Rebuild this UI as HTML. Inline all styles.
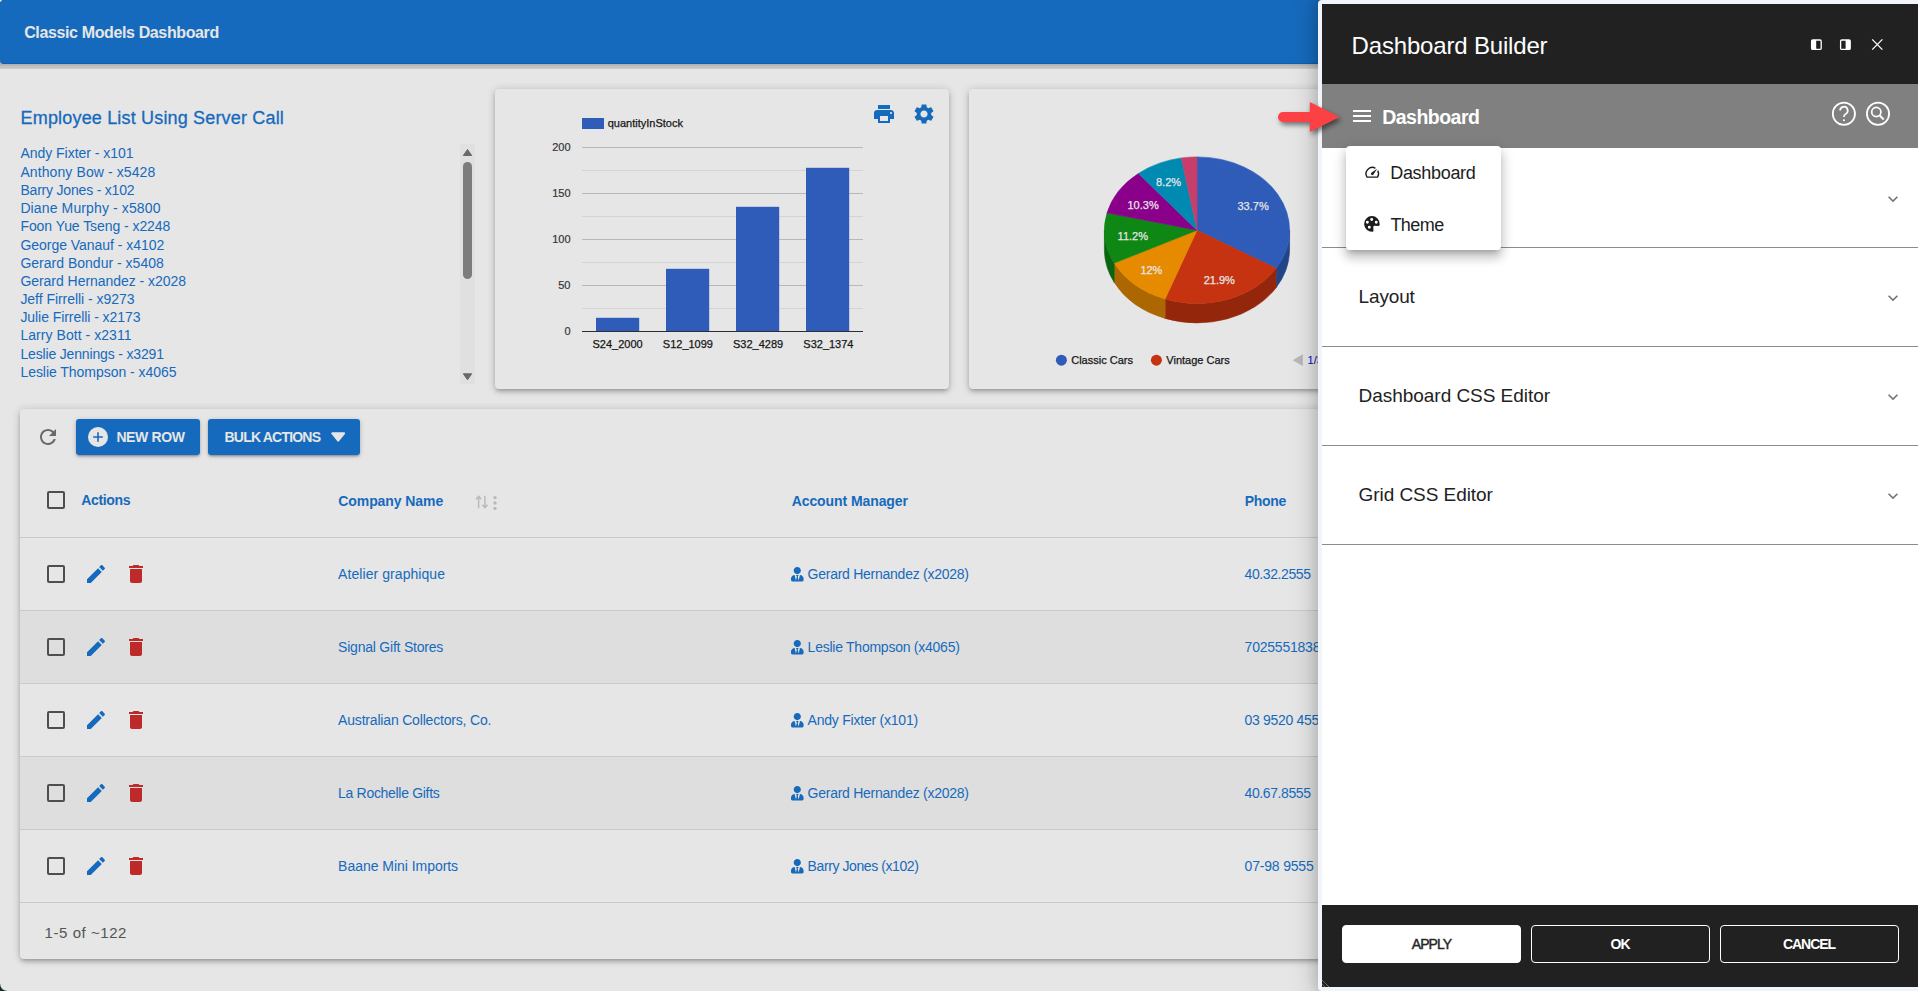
<!DOCTYPE html>
<html lang="en"><head><meta charset="utf-8"><title>Classic Models Dashboard</title>
<style>
*{box-sizing:border-box}
html,body{margin:0;padding:0}
body{width:1918px;height:991px;overflow:hidden;background:#fff;font-family:"Liberation Sans",sans-serif;position:relative}
h2{margin:0;font-weight:normal}
.t{position:absolute;white-space:pre;line-height:1}
.abs{position:absolute;overflow:visible}
.hdr{position:absolute;left:0;top:0;width:1918px;height:64px;background:#1976d2;border-bottom:1px solid #0f69c9;border-radius:0 0 0 4px}
.hshadow{position:absolute;left:0;top:60px;width:1918px;height:9px;background:linear-gradient(#bdbdbd 0,#c1c1c1 4px,#d6d6d6 6.5px,#e4e4e4 9px)}
.card{position:absolute;background:#fff;border-radius:4px;box-shadow:0 1px 8px rgba(0,0,0,.2),0 3px 4px rgba(0,0,0,.14),0 3px 3px -2px rgba(0,0,0,.12)}
.sbtrack{position:absolute;left:460px;top:144px;width:15px;height:240px;background:#f9f9f9}
.sbthumb{position:absolute;left:463px;top:162px;width:9px;height:117px;border-radius:5px;background:#8a8a8a}
.btn{position:absolute;background:#1976d2;border-radius:3px;box-shadow:0 1px 5px rgba(0,0,0,.2),0 2px 2px rgba(0,0,0,.14),0 3px 1px -2px rgba(0,0,0,.12)}
.cb{position:absolute;width:18px;height:18px;border:2px solid #575757;border-radius:2px}
.row{position:absolute;left:20px;width:1500px;height:73px;border-top:1px solid #e0e0e0}
.row.alt{background:rgba(0,0,0,.03)}
.overlay{position:absolute;left:0;top:0;width:1918px;height:991px;background:rgba(0,0,0,.098)}
.corner{position:absolute;left:-1px;top:984px;width:8px;height:8px;background:radial-gradient(circle at 100% 0,rgba(0,0,0,0) 6.2px,#16282a 7.4px)}
.tl{position:absolute;left:0;top:0;width:3px;height:3px;background:radial-gradient(circle at 0 0,#f3ebdd 0.9px,rgba(243,235,221,0) 2.4px)}
.arrow{filter:drop-shadow(2px 3px 2.5px rgba(0,0,0,.5))}
.panel{position:absolute;left:1318px;top:0;width:604px;height:991px;background:#f1f5f9;border-radius:4px;box-shadow:0 0 12px 2px rgba(0,0,0,.13),0 0 24px 6px rgba(0,0,0,.15)}
.phead{position:absolute;left:4px;top:4px;width:600px;height:80px;background:#212121}
.pbar{position:absolute;left:4px;top:84px;width:600px;height:64px;background:#808080}
.pbody{position:absolute;left:4px;top:148px;width:600px;height:757px;background:#fff}
.pfoot{position:absolute;left:4px;top:905px;width:600px;height:82px;background:#212121}
.acc{position:absolute;left:1322px;width:596px;height:1px;background:#8c8c8c}
.menu{position:absolute;left:1346px;top:146px;width:155px;height:104px;background:#fff;border-radius:4px;box-shadow:0 5px 5px -3px rgba(0,0,0,.2),0 8px 10px 1px rgba(0,0,0,.14),0 3px 14px 2px rgba(0,0,0,.12)}
.fbtn{position:absolute;top:925px;width:179px;height:38px;border:1px solid #fff;border-radius:4px}
.fbtn.solid{background:#fff}
</style></head>
<body>
<div class="hshadow"></div><header class="hdr"></header>
<div class="t" style="left:24.20px;top:25px;font-size:16px;color:#fff;font-weight:bold;letter-spacing:-0.372px;">Classic Models Dashboard</div>
<section class="emp">
<h2 class="t" style="left:20.60px;top:109px;font-size:18px;color:#1976d2;letter-spacing:0.171px;-webkit-text-stroke:0.3px #1976d2;">Employee List Using Server Call</h2>
<div class="t" style="left:20.40px;top:146px;font-size:14px;color:#1976d2;letter-spacing:-0.028px;">Andy Fixter - x101</div>
<div class="t" style="left:20.40px;top:165px;font-size:14px;color:#1976d2;letter-spacing:0.100px;">Anthony Bow - x5428</div>
<div class="t" style="left:20.40px;top:183px;font-size:14px;color:#1976d2;letter-spacing:-0.194px;">Barry Jones - x102</div>
<div class="t" style="left:20.40px;top:201px;font-size:14px;color:#1976d2;letter-spacing:0.122px;">Diane Murphy - x5800</div>
<div class="t" style="left:20.40px;top:219px;font-size:14px;color:#1976d2;letter-spacing:-0.062px;">Foon Yue Tseng - x2248</div>
<div class="t" style="left:20.40px;top:238px;font-size:14px;color:#1976d2;letter-spacing:-0.034px;">George Vanauf - x4102</div>
<div class="t" style="left:20.40px;top:256px;font-size:14px;color:#1976d2;letter-spacing:0.009px;">Gerard Bondur - x5408</div>
<div class="t" style="left:20.40px;top:274px;font-size:14px;color:#1976d2;letter-spacing:-0.039px;">Gerard Hernandez - x2028</div>
<div class="t" style="left:20.40px;top:292px;font-size:14px;color:#1976d2;letter-spacing:-0.043px;">Jeff Firrelli - x9273</div>
<div class="t" style="left:20.40px;top:310px;font-size:14px;color:#1976d2;letter-spacing:-0.062px;">Julie Firrelli - x2173</div>
<div class="t" style="left:20.40px;top:328px;font-size:14px;color:#1976d2;letter-spacing:0.053px;">Larry Bott - x2311</div>
<div class="t" style="left:20.40px;top:347px;font-size:14px;color:#1976d2;letter-spacing:-0.161px;">Leslie Jennings - x3291</div>
<div class="t" style="left:20.40px;top:365px;font-size:14px;color:#1976d2;letter-spacing:-0.041px;">Leslie Thompson - x4065</div>
<div class="sbtrack"></div><div class="sbthumb"></div>
<svg class="abs" style="left:460px;top:144px" width="15" height="240" viewBox="0 0 15 240"><path d="M3.3 11.5 L7.5 5.5 L11.7 11.5Z M3.3 229.8 L7.5 235.8 L11.7 229.8Z" fill="#757575" stroke="#757575" stroke-width="1" stroke-linejoin="round"/></svg>
</section>
<section class="card" style="left:495px;top:89px;width:454px;height:300px"></section>
<svg class="abs" style="left:495px;top:89px" width="454" height="300" viewBox="495 89 454 300" font-family='"Liberation Sans", sans-serif' font-size="11">
<rect x="582" y="118" width="22" height="11" fill="#3366cc"/>
<text x="607.7" y="127" fill="#1a1a1a" stroke="#1a1a1a" stroke-width="0.25">quantityInStock</text>
<rect x="582" y="308" width="281" height="1" fill="#ebebeb"/>
<rect x="582" y="262" width="281" height="1" fill="#ebebeb"/>
<rect x="582" y="216" width="281" height="1" fill="#ebebeb"/>
<rect x="582" y="170" width="281" height="1" fill="#ebebeb"/>
<rect x="582" y="285" width="281" height="1" fill="#cccccc"/>
<rect x="582" y="239" width="281" height="1" fill="#cccccc"/>
<rect x="582" y="193" width="281" height="1" fill="#cccccc"/>
<rect x="582" y="147" width="281" height="1" fill="#cccccc"/>
<rect x="596" y="317.8" width="43.2" height="13.2" fill="#3366cc"/>
<rect x="666" y="268.8" width="43.2" height="62.2" fill="#3366cc"/>
<rect x="736" y="206.8" width="43.2" height="124.2" fill="#3366cc"/>
<rect x="806" y="167.8" width="43.2" height="163.2" fill="#3366cc"/>
<rect x="582" y="331" width="281" height="1" fill="#333333"/>
<text x="570.5" y="334.9" text-anchor="end" fill="#3c3c3c" stroke="#3c3c3c" stroke-width="0.2">0</text>
<text x="570.5" y="288.9" text-anchor="end" fill="#3c3c3c" stroke="#3c3c3c" stroke-width="0.2">50</text>
<text x="570.5" y="242.9" text-anchor="end" fill="#3c3c3c" stroke="#3c3c3c" stroke-width="0.2">100</text>
<text x="570.5" y="196.9" text-anchor="end" fill="#3c3c3c" stroke="#3c3c3c" stroke-width="0.2">150</text>
<text x="570.5" y="150.9" text-anchor="end" fill="#3c3c3c" stroke="#3c3c3c" stroke-width="0.2">200</text>
<text x="617.6" y="347.8" text-anchor="middle" fill="#1a1a1a" stroke="#1a1a1a" stroke-width="0.25">S24_2000</text>
<text x="687.9" y="347.8" text-anchor="middle" fill="#1a1a1a" stroke="#1a1a1a" stroke-width="0.25">S12_1099</text>
<text x="758.1" y="347.8" text-anchor="middle" fill="#1a1a1a" stroke="#1a1a1a" stroke-width="0.25">S32_4289</text>
<text x="828.4" y="347.8" text-anchor="middle" fill="#1a1a1a" stroke="#1a1a1a" stroke-width="0.25">S32_1374</text>
</svg>
<svg class="abs" style="left:872px;top:102px" width="24" height="24" viewBox="0 0 24 24"><path d="M19 8H5c-1.66 0-3 1.34-3 3v6h4v4h12v-4h4v-6c0-1.66-1.34-3-3-3zm-3 11H8v-5h8v5zm3-7c-.55 0-1-.45-1-1s.45-1 1-1 1 .45 1 1-.45 1-1 1zm-1-9H6v4h12V3z" fill="#1976d2" /></svg>
<svg class="abs" style="left:912px;top:102px" width="24" height="24" viewBox="0 0 24 24"><path d="M19.14 12.94c.04-.3.06-.61.06-.94 0-.32-.02-.64-.07-.94l2.03-1.58c.18-.14.23-.41.12-.61l-1.92-3.32c-.12-.22-.37-.29-.59-.22l-2.39.96c-.5-.38-1.03-.7-1.62-.94l-.36-2.54c-.04-.24-.24-.41-.48-.41h-3.84c-.24 0-.43.17-.47.41l-.36 2.54c-.59.24-1.13.57-1.62.94l-2.39-.96c-.22-.08-.47 0-.59.22L2.74 8.87c-.12.21-.08.47.12.61l2.03 1.58c-.05.3-.09.63-.09.94s.02.64.07.94l-2.03 1.58c-.18.14-.23.41-.12.61l1.92 3.32c.12.22.37.29.59.22l2.39-.96c.5.38 1.03.7 1.62.94l.36 2.54c.05.24.24.41.48.41h3.84c.24 0 .44-.17.47-.41l.36-2.54c.59-.24 1.13-.56 1.62-.94l2.39.96c.22.08.47 0 .59-.22l1.92-3.32c.12-.22.07-.47-.12-.61l-2.01-1.58zM12 15.6c-1.98 0-3.6-1.62-3.6-3.6s1.62-3.6 3.6-3.6 3.6 1.62 3.6 3.6-1.62 3.6-3.6 3.6z" fill="#1976d2" /></svg>
<section class="card" style="left:969px;top:89px;width:454px;height:300px"></section>
<svg class="abs" style="left:969px;top:89px" width="454" height="300" viewBox="969 89 454 300" font-family='"Liberation Sans", sans-serif' font-size="11">
<path d="M1289.60 230.20 A92.6 73.3 0 0 1 1276.11 268.30 L1276.11 287.70 A92.6 73.3 0 0 0 1289.60 249.60Z" fill="#264d99" stroke="#264d99" stroke-width="0.6"/>
<path d="M1276.11 268.30 A92.6 73.3 0 0 1 1165.09 299.01 L1165.09 318.41 A92.6 73.3 0 0 0 1276.11 287.70Z" fill="#a52b0e" stroke="#a52b0e" stroke-width="0.6"/>
<path d="M1165.09 299.01 A92.6 73.3 0 0 1 1114.23 263.07 L1114.23 282.47 A92.6 73.3 0 0 0 1165.09 318.41Z" fill="#bf7300" stroke="#bf7300" stroke-width="0.6"/>
<path d="M1114.23 263.07 A92.6 73.3 0 0 1 1104.40 230.20 L1104.40 249.60 A92.6 73.3 0 0 0 1114.23 282.47Z" fill="#0c7012" stroke="#0c7012" stroke-width="0.6"/>
<path d="M1197.0 230.2 L1197.00 156.90 A92.6 73.3 0 0 1 1276.11 268.30Z" fill="#3366cc" stroke="#3366cc" stroke-width="0.6"/>
<path d="M1197.0 230.2 L1276.11 268.30 A92.6 73.3 0 0 1 1165.09 299.01Z" fill="#dc3912" stroke="#dc3912" stroke-width="0.6"/>
<path d="M1197.0 230.2 L1165.09 299.01 A92.6 73.3 0 0 1 1114.23 263.07Z" fill="#ff9900" stroke="#ff9900" stroke-width="0.6"/>
<path d="M1197.0 230.2 L1114.23 263.07 A92.6 73.3 0 0 1 1107.03 212.86Z" fill="#109618" stroke="#109618" stroke-width="0.6"/>
<path d="M1197.0 230.2 L1107.03 212.86 A92.6 73.3 0 0 1 1138.42 173.43Z" fill="#990099" stroke="#990099" stroke-width="0.6"/>
<path d="M1197.0 230.2 L1138.42 173.43 A92.6 73.3 0 0 1 1181.37 157.95Z" fill="#0099c6" stroke="#0099c6" stroke-width="0.6"/>
<path d="M1197.0 230.2 L1181.37 157.95 A92.6 73.3 0 0 1 1197.00 156.90Z" fill="#dd4477" stroke="#dd4477" stroke-width="0.6"/>
<text x="1253.1" y="210.1" text-anchor="middle" fill="#fff" stroke="#fff" stroke-width="0.25">33.7%</text>
<text x="1219.3" y="283.8" text-anchor="middle" fill="#fff" stroke="#fff" stroke-width="0.25">21.9%</text>
<text x="1151.4" y="274.1" text-anchor="middle" fill="#fff" stroke="#fff" stroke-width="0.25">12%</text>
<text x="1132.8" y="240.2" text-anchor="middle" fill="#fff" stroke="#fff" stroke-width="0.25">11.2%</text>
<text x="1143.1" y="208.5" text-anchor="middle" fill="#fff" stroke="#fff" stroke-width="0.25">10.3%</text>
<text x="1168.5" y="186.3" text-anchor="middle" fill="#fff" stroke="#fff" stroke-width="0.25">8.2%</text>
<circle cx="1061.4" cy="360.2" r="5.5" fill="#3366cc"/><text x="1071.2" y="364.2" fill="#1a1a1a" stroke="#1a1a1a" stroke-width="0.25">Classic Cars</text>
<circle cx="1156.4" cy="360.2" r="5.5" fill="#dc3912"/><text x="1166.3" y="364.2" fill="#1a1a1a" stroke="#1a1a1a" stroke-width="0.25">Vintage Cars</text>
<path d="M1292.6 360.2 L1302.8 354.3 V366.1Z" fill="#cccccc"/><text x="1307.6" y="364.2" fill="#0011cc">1/3</text>
</svg>
<section class="card" style="left:20px;top:409px;width:1500px;height:550px"></section>
<svg class="abs" style="left:36px;top:425px" width="24" height="24" viewBox="0 0 24 24"><path d="M17.65 6.35C16.2 4.9 14.21 4 12 4c-4.42 0-7.99 3.58-7.99 8s3.57 8 7.99 8c3.73 0 6.84-2.55 7.73-6h-2.08c-.82 2.33-3.04 4-5.65 4-3.31 0-6-2.69-6-6s2.69-6 6-6c1.66 0 3.14.69 4.22 1.78L13 11h7V4l-2.35 2.35z" fill="#757575" /></svg>
<div class="btn" style="left:76px;top:419px;width:124px;height:36px"></div>
<svg class="abs" style="left:85.8px;top:425px" width="24" height="24" viewBox="0 0 24 24"><circle cx="12" cy="12" r="10" fill="#fff"/><path d="M12 7.200V16.800M7.200 12H16.800" stroke="#1976d2" stroke-width="1.600" fill="none"/></svg>
<span class="t" style="left:116.40px;top:430px;font-size:14px;color:#fff;font-weight:bold;letter-spacing:-0.381px;">NEW ROW</span>
<div class="btn" style="left:208px;top:419px;width:152px;height:36px"></div>
<span class="t" style="left:224.50px;top:430px;font-size:14px;color:#fff;font-weight:bold;letter-spacing:-0.797px;">BULK ACTIONS</span>
<svg class="abs" style="left:328px;top:428px" width="20" height="18" viewBox="328 428 20 18"><path d="M332.3 433.3 H344.1 L338.2 440.6Z" fill="#fff" stroke="#fff" stroke-width="2" stroke-linejoin="round"/></svg>
<div class="cb" style="left:47px;top:491px"></div>
<span class="t" style="left:81.30px;top:493px;font-size:14px;color:#1976d2;font-weight:bold;letter-spacing:-0.363px;">Actions</span>
<span class="t" style="left:338.30px;top:494px;font-size:14px;color:#1976d2;font-weight:bold;letter-spacing:-0.084px;">Company Name</span>
<span class="t" style="left:791.70px;top:494px;font-size:14px;color:#1976d2;font-weight:bold;letter-spacing:-0.085px;">Account Manager</span>
<span class="t" style="left:1244.80px;top:494px;font-size:14px;color:#1976d2;font-weight:bold;letter-spacing:-0.316px;">Phone</span>
<svg class="abs" style="left:474px;top:494px" width="26" height="17" viewBox="474 494 26 17"><g fill="none" stroke="#cfcfcf" stroke-width="1.5"><path d="M478.6 508.3 V496.4 M476 499.2 L478.6 496.4 L481.2 499.2 M484.9 495.7 V507.6 M482.3 504.8 L484.9 507.6 L487.5 504.8"/></g><g fill="#cfcfcf"><circle cx="495" cy="497.6" r="1.7"/><circle cx="495" cy="503" r="1.7"/><circle cx="495" cy="508.4" r="1.7"/></g></svg>
<div class="row" style="top:537px"></div>
<div class="cb" style="left:47px;top:565px"></div>
<svg class="abs" style="left:83.8px;top:561.8px" width="24" height="24" viewBox="0 0 24 24"><path d="M3 17.25V21h3.75L17.81 9.94l-3.75-3.75L3 17.25zM20.71 7.04c.39-.39.39-1.02 0-1.41l-2.34-2.34c-.39-.39-1.02-.39-1.41 0l-1.83 1.83 3.75 3.75 1.83-1.83z" fill="#1976d2" /></svg>
<svg class="abs" style="left:123.8px;top:562px" width="24" height="24" viewBox="0 0 24 24"><path d="M6 19c0 1.1.9 2 2 2h8c1.1 0 2-.9 2-2V7H6v12zM19 4h-3.5l-1-1h-5l-1 1H5v2h14V4z" fill="#d32f2f" /></svg>
<span class="t" style="left:338.10px;top:567px;font-size:14px;color:#1976d2;letter-spacing:0.067px;">Atelier graphique</span>
<svg class="abs" style="left:791.2px;top:566.7px" width="12.6" height="14.4" viewBox="0 0 448 512" preserveAspectRatio="none"><path fill="#1976d2" d="M224 256c70.7 0 128-57.3 128-128S294.700 0 224 0 96 57.300 96 128s57.300 128 128 128zm95.800 32.600L272 480l-32-136 32-56h-96l32 56-32 136-47.800-191.400C56.900 292 0 350.300 0 422.400V464c0 26.500 21.500 48 48 48h352c26.500 0 48-21.500 48-48v-41.600c0-72.100-56.900-130.400-128.200-133.800z"/></svg>
<span class="t" style="left:807.60px;top:567px;font-size:14px;color:#1976d2;letter-spacing:-0.259px;">Gerard Hernandez (x2028)</span>
<span class="t" style="left:1244.60px;top:567px;font-size:14px;color:#1976d2;letter-spacing:-0.408px;">40.32.2555</span>
<div class="row alt" style="top:610px"></div>
<div class="cb" style="left:47px;top:638px"></div>
<svg class="abs" style="left:83.8px;top:634.8px" width="24" height="24" viewBox="0 0 24 24"><path d="M3 17.25V21h3.75L17.81 9.94l-3.75-3.75L3 17.25zM20.71 7.04c.39-.39.39-1.02 0-1.41l-2.34-2.34c-.39-.39-1.02-.39-1.41 0l-1.83 1.83 3.75 3.75 1.83-1.83z" fill="#1976d2" /></svg>
<svg class="abs" style="left:123.8px;top:635px" width="24" height="24" viewBox="0 0 24 24"><path d="M6 19c0 1.1.9 2 2 2h8c1.1 0 2-.9 2-2V7H6v12zM19 4h-3.5l-1-1h-5l-1 1H5v2h14V4z" fill="#d32f2f" /></svg>
<span class="t" style="left:338.10px;top:640px;font-size:14px;color:#1976d2;letter-spacing:-0.219px;">Signal Gift Stores</span>
<svg class="abs" style="left:791.2px;top:639.7px" width="12.6" height="14.4" viewBox="0 0 448 512" preserveAspectRatio="none"><path fill="#1976d2" d="M224 256c70.7 0 128-57.3 128-128S294.700 0 224 0 96 57.300 96 128s57.300 128 128 128zm95.800 32.600L272 480l-32-136 32-56h-96l32 56-32 136-47.800-191.400C56.900 292 0 350.300 0 422.400V464c0 26.500 21.500 48 48 48h352c26.500 0 48-21.500 48-48v-41.600c0-72.100-56.900-130.400-128.200-133.800z"/></svg>
<span class="t" style="left:807.60px;top:640px;font-size:14px;color:#1976d2;letter-spacing:-0.249px;">Leslie Thompson (x4065)</span>
<span class="t" style="left:1244.60px;top:640px;font-size:14px;color:#1976d2;letter-spacing:-0.227px;">7025551838</span>
<div class="row" style="top:683px"></div>
<div class="cb" style="left:47px;top:711px"></div>
<svg class="abs" style="left:83.8px;top:707.8px" width="24" height="24" viewBox="0 0 24 24"><path d="M3 17.25V21h3.75L17.81 9.94l-3.75-3.75L3 17.25zM20.71 7.04c.39-.39.39-1.02 0-1.41l-2.34-2.34c-.39-.39-1.02-.39-1.41 0l-1.83 1.83 3.75 3.75 1.83-1.83z" fill="#1976d2" /></svg>
<svg class="abs" style="left:123.8px;top:708px" width="24" height="24" viewBox="0 0 24 24"><path d="M6 19c0 1.1.9 2 2 2h8c1.1 0 2-.9 2-2V7H6v12zM19 4h-3.5l-1-1h-5l-1 1H5v2h14V4z" fill="#d32f2f" /></svg>
<span class="t" style="left:338.10px;top:713px;font-size:14px;color:#1976d2;letter-spacing:-0.187px;">Australian Collectors, Co.</span>
<svg class="abs" style="left:791.2px;top:712.7px" width="12.6" height="14.4" viewBox="0 0 448 512" preserveAspectRatio="none"><path fill="#1976d2" d="M224 256c70.7 0 128-57.3 128-128S294.700 0 224 0 96 57.300 96 128s57.300 128 128 128zm95.800 32.600L272 480l-32-136 32-56h-96l32 56-32 136-47.800-191.400C56.900 292 0 350.300 0 422.400V464c0 26.500 21.500 48 48 48h352c26.500 0 48-21.500 48-48v-41.600c0-72.100-56.900-130.400-128.200-133.800z"/></svg>
<span class="t" style="left:807.60px;top:713px;font-size:14px;color:#1976d2;letter-spacing:-0.226px;">Andy Fixter (x101)</span>
<span class="t" style="left:1244.60px;top:713px;font-size:14px;color:#1976d2;letter-spacing:-0.312px;">03 9520 4555</span>
<div class="row alt" style="top:756px"></div>
<div class="cb" style="left:47px;top:784px"></div>
<svg class="abs" style="left:83.8px;top:780.8px" width="24" height="24" viewBox="0 0 24 24"><path d="M3 17.25V21h3.75L17.81 9.94l-3.75-3.75L3 17.25zM20.71 7.04c.39-.39.39-1.02 0-1.41l-2.34-2.34c-.39-.39-1.02-.39-1.41 0l-1.83 1.83 3.75 3.75 1.83-1.83z" fill="#1976d2" /></svg>
<svg class="abs" style="left:123.8px;top:781px" width="24" height="24" viewBox="0 0 24 24"><path d="M6 19c0 1.1.9 2 2 2h8c1.1 0 2-.9 2-2V7H6v12zM19 4h-3.5l-1-1h-5l-1 1H5v2h14V4z" fill="#d32f2f" /></svg>
<span class="t" style="left:338.10px;top:786px;font-size:14px;color:#1976d2;letter-spacing:-0.312px;">La Rochelle Gifts</span>
<svg class="abs" style="left:791.2px;top:785.7px" width="12.6" height="14.4" viewBox="0 0 448 512" preserveAspectRatio="none"><path fill="#1976d2" d="M224 256c70.7 0 128-57.3 128-128S294.700 0 224 0 96 57.300 96 128s57.300 128 128 128zm95.800 32.600L272 480l-32-136 32-56h-96l32 56-32 136-47.800-191.400C56.900 292 0 350.300 0 422.400V464c0 26.500 21.500 48 48 48h352c26.500 0 48-21.500 48-48v-41.600c0-72.100-56.900-130.400-128.200-133.800z"/></svg>
<span class="t" style="left:807.60px;top:786px;font-size:14px;color:#1976d2;letter-spacing:-0.259px;">Gerard Hernandez (x2028)</span>
<span class="t" style="left:1244.60px;top:786px;font-size:14px;color:#1976d2;letter-spacing:-0.408px;">40.67.8555</span>
<div class="row" style="top:829px"></div>
<div class="cb" style="left:47px;top:857px"></div>
<svg class="abs" style="left:83.8px;top:853.8px" width="24" height="24" viewBox="0 0 24 24"><path d="M3 17.25V21h3.75L17.81 9.94l-3.75-3.75L3 17.25zM20.71 7.04c.39-.39.39-1.02 0-1.41l-2.34-2.34c-.39-.39-1.02-.39-1.41 0l-1.83 1.83 3.75 3.75 1.83-1.83z" fill="#1976d2" /></svg>
<svg class="abs" style="left:123.8px;top:854px" width="24" height="24" viewBox="0 0 24 24"><path d="M6 19c0 1.1.9 2 2 2h8c1.1 0 2-.9 2-2V7H6v12zM19 4h-3.5l-1-1h-5l-1 1H5v2h14V4z" fill="#d32f2f" /></svg>
<span class="t" style="left:338.10px;top:859px;font-size:14px;color:#1976d2;letter-spacing:-0.034px;">Baane Mini Imports</span>
<svg class="abs" style="left:791.2px;top:858.7px" width="12.6" height="14.4" viewBox="0 0 448 512" preserveAspectRatio="none"><path fill="#1976d2" d="M224 256c70.7 0 128-57.3 128-128S294.700 0 224 0 96 57.300 96 128s57.300 128 128 128zm95.800 32.600L272 480l-32-136 32-56h-96l32 56-32 136-47.800-191.400C56.900 292 0 350.300 0 422.400V464c0 26.500 21.500 48 48 48h352c26.500 0 48-21.500 48-48v-41.600c0-72.100-56.900-130.400-128.200-133.800z"/></svg>
<span class="t" style="left:807.60px;top:859px;font-size:14px;color:#1976d2;letter-spacing:-0.410px;">Barry Jones (x102)</span>
<span class="t" style="left:1244.60px;top:859px;font-size:14px;color:#1976d2;letter-spacing:-0.194px;">07-98 9555</span>
<div class="row" style="top:902px;height:1px"></div>
<span class="t" style="left:44.60px;top:925px;font-size:15px;color:#5e5e5e;letter-spacing:0.553px;">1-5 of ~122</span>
<div class="overlay"></div>
<div class="corner"></div><div class="tl"></div>
<aside class="panel">
<div class="phead"></div><div class="pbar"></div><div class="pbody"></div><div class="pfoot"></div>
</aside>
<div class="t" style="left:1351.60px;top:34px;font-size:24px;color:#fff;letter-spacing:-0.176px;">Dashboard Builder</div>
<svg class="abs" style="left:1808px;top:36px" width="80" height="18" viewBox="1808 36 80 18"><g fill="none" stroke="#fff" stroke-width="1.3"><rect x="1811.6" y="40" width="9.6" height="9.4" rx="1.2"/><rect x="1840.6" y="40" width="9.6" height="9.4" rx="1.2"/><path d="M1872.2 39.4 L1882.4 49.6 M1882.4 39.4 L1872.2 49.6"/></g><rect x="1811.6" y="40" width="4.6" height="9.4" fill="#fff"/><rect x="1845.6" y="40" width="4.6" height="9.4" fill="#fff"/></svg>
<svg class="abs" style="left:1350px;top:104.3px" width="24" height="24" viewBox="0 0 24 24"><path d="M3 18h18v-2H3v2zm0-5h18v-2H3v2zm0-7v2h18V6H3z" fill="#fff" /></svg>
<div class="t" style="left:1382.20px;top:108px;font-size:19.5px;color:#fff;font-weight:bold;letter-spacing:-0.518px;">Dashboard</div>
<svg class="abs" style="left:1828px;top:98px" width="66" height="32" viewBox="1828 98 66 32"><g fill="none" stroke="#fff" stroke-width="1.8"><circle cx="1843.9" cy="113.8" r="11.1"/><circle cx="1878" cy="113.8" r="11.1"/><circle cx="1876.3" cy="112" r="4.6" stroke-width="1.7"/><path d="M1879.7 115.5 L1883.7 119.5" stroke-width="1.9"/><path d="M1840.1 110.6 a3.8 3.8 0 1 1 5.6 3.3 c-1.3 0.8 -1.8 1.5 -1.8 3.2" stroke-width="1.7"/></g><circle cx="1843.9" cy="120.3" r="1.05" fill="#fff"/></svg>
<div class="acc" style="top:247px"></div>
<svg class="abs" style="left:1882.6px;top:188.6px" width="20" height="20" viewBox="0 0 24 24"><path d="M16.59 8.59L12 13.17 7.41 8.59 6 10l6 6 6-6z" fill="#757575" /></svg>
<div class="acc" style="top:346px"></div>
<svg class="abs" style="left:1882.6px;top:287.6px" width="20" height="20" viewBox="0 0 24 24"><path d="M16.59 8.59L12 13.17 7.41 8.59 6 10l6 6 6-6z" fill="#757575" /></svg>
<div class="t" style="left:1358.60px;top:287px;font-size:19px;color:#222;letter-spacing:-0.158px;">Layout</div>
<div class="acc" style="top:445px"></div>
<svg class="abs" style="left:1882.6px;top:386.6px" width="20" height="20" viewBox="0 0 24 24"><path d="M16.59 8.59L12 13.17 7.41 8.59 6 10l6 6 6-6z" fill="#757575" /></svg>
<div class="t" style="left:1358.60px;top:386px;font-size:19px;color:#222;letter-spacing:-0.041px;">Dashboard CSS Editor</div>
<div class="acc" style="top:544px"></div>
<svg class="abs" style="left:1882.6px;top:485.6px" width="20" height="20" viewBox="0 0 24 24"><path d="M16.59 8.59L12 13.17 7.41 8.59 6 10l6 6 6-6z" fill="#757575" /></svg>
<div class="t" style="left:1358.60px;top:485px;font-size:19px;color:#222;letter-spacing:-0.064px;">Grid CSS Editor</div>
<div class="menu"></div>
<svg class="abs" style="left:1363.8px;top:164.1px" width="16.6" height="16.6" viewBox="0 0 24 24"><path d="M20.38 8.57l-1.23 1.85a8 8 0 0 1-.22 7.58H5.07A8 8 0 0 1 15.58 6.85l1.85-1.23A10 10 0 0 0 3.35 19a2 2 0 0 0 1.72 1h13.85a2 2 0 0 0 1.74-1 10 10 0 0 0-.27-10.44zm-9.79 6.84a2 2 0 0 0 2.83 0l5.66-8.49-8.49 5.66a2 2 0 0 0 0 2.830z" fill="#1d1d1d" /></svg>
<span class="t" style="left:1390.20px;top:164px;font-size:18px;color:#1d1d1d;letter-spacing:-0.307px;">Dashboard</span>
<svg class="abs" style="left:1364.1px;top:216.1px" width="15.8" height="15.8" viewBox="0 0 16 16"><path fill="#1d1d1d" fill-rule="evenodd" d="M8 0.1A7.9 7.9 0 1 0 8.6 15.88Q9.9 15.8 9.6 14.4L9.4 11.4Q9.3 9.9 10.9 9.9L14.6 10.1Q16 10.1 15.9 8.3A7.9 7.9 0 0 0 8 0.1ZM9.3 3.500a1.500 1.500 0 1 0 -3 0a1.500 1.500 0 1 0 3 0ZM4.900 6.400a1.500 1.500 0 1 0 -3 0a1.500 1.500 0 1 0 3 0ZM13.900 6.400a1.500 1.500 0 1 0 -3 0a1.500 1.500 0 1 0 3 0ZM6.900 11.400a1.500 1.500 0 1 0 -3 0a1.500 1.500 0 1 0 3 0Z"/></svg>
<span class="t" style="left:1390.40px;top:216px;font-size:18px;color:#1d1d1d;letter-spacing:-0.566px;">Theme</span>
<div class="fbtn solid" style="left:1342px"></div><div class="fbtn" style="left:1531px"></div><div class="fbtn" style="left:1720px"></div>
<span class="t" style="left:1411.80px;top:937px;font-size:14px;color:#262626;letter-spacing:-0.942px;-webkit-text-stroke:0.45px #262626;">APPLY</span>
<span class="t" style="left:1610.50px;top:937px;font-size:14px;color:#fff;font-weight:bold;letter-spacing:-0.800px;">OK</span>
<span class="t" style="left:1783.00px;top:937px;font-size:14px;color:#fff;font-weight:bold;letter-spacing:-1.057px;">CANCEL</span>
<svg class="abs" style="left:1322px;top:978px" width="10" height="10" viewBox="0 0 10 10"><path d="M0.5 2.5 L7 9 M0.5 6.5 L3 9" stroke="#ddd" stroke-width="0.7" stroke-dasharray="1 0.6"/></svg>
<svg class="abs arrow" style="left:1260px;top:90px" width="100" height="60" viewBox="1260 90 100 60"><path d="M1283 112 H1309.8 V102 L1339.6 117 L1309.8 131.9 V122.1 H1283 A5.05 5.05 0 0 1 1283 112Z" fill="#fc4144"/></svg>
</body></html>
